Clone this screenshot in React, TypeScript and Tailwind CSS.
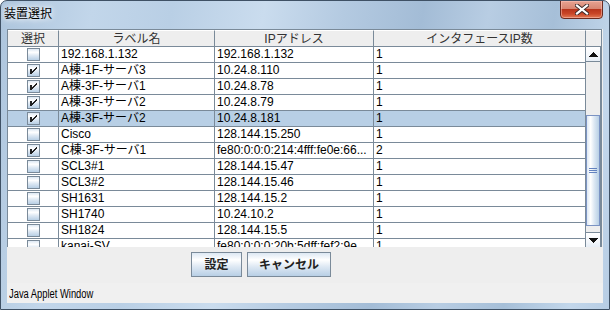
import React from "react";

type Row = { c: boolean; label: string; ip: string; n: string; sel?: boolean };

const rows: Row[] = [
  { c: false, label: "192.168.1.132", ip: "192.168.1.132", n: "1" },
  { c: true, label: "A棟-1F-サーバ3", ip: "10.24.8.110", n: "1" },
  { c: true, label: "A棟-3F-サーバ1", ip: "10.24.8.78", n: "1" },
  { c: true, label: "A棟-3F-サーバ2", ip: "10.24.8.79", n: "1" },
  { c: true, label: "A棟-3F-サーバ2", ip: "10.24.8.181", n: "1", sel: true },
  { c: false, label: "Cisco", ip: "128.144.15.250", n: "1" },
  { c: true, label: "C棟-3F-サーバ1", ip: "fe80:0:0:0:214:4fff:fe0e:66...", n: "2" },
  { c: false, label: "SCL3#1", ip: "128.144.15.47", n: "1" },
  { c: false, label: "SCL3#2", ip: "128.144.15.46", n: "1" },
  { c: false, label: "SH1631", ip: "128.144.15.2", n: "1" },
  { c: false, label: "SH1740", ip: "10.24.10.2", n: "1" },
  { c: false, label: "SH1824", ip: "128.144.15.5", n: "1" },
  { c: false, label: "kanai-SV", ip: "fe80:0:0:0:20b:5dff:fef2:9e...", n: "1" },
];

const checkPixels: [number, number][] = [
  [9, 3], [8, 4], [7, 5], [6, 6], [5, 7],
  [9, 4], [8, 5], [7, 6], [6, 7], [5, 8],
];

function CheckBox({ checked }: { checked: boolean }) {
  return (
    <svg width="13" height="13" viewBox="0 0 13 13" shapeRendering="crispEdges">
      <defs>
        <linearGradient id="cbg" x1="0" y1="0" x2="0" y2="1">
          <stop offset="0" stopColor="#dde8f3" />
          <stop offset="0.3" stopColor="#ffffff" />
          <stop offset="0.6" stopColor="#dde8f3" />
          <stop offset="1" stopColor="#b8cfe5" />
        </linearGradient>
      </defs>
      <rect x="0" y="0" width="13" height="13" fill="#7a8a99" />
      <rect x="1" y="1" width="11" height="11" fill="url(#cbg)" />
      {checked && (
        <g fill="#222222">
          <rect x="3" y="5" width="2" height="5" />
          {checkPixels.map(([x, y], i) => (
            <rect key={i} x={x} y={y} width="1" height="1" />
          ))}
        </g>
      )}
    </svg>
  );
}

const font = "font-['Liberation_Sans','Noto_Sans_CJK_JP',sans-serif]";
const cols = "grid grid-cols-[51px_156px_159px_212px]";

function Arrow({ up }: { up: boolean }) {
  return (
    <svg width="9" height="5" viewBox="0 0 9 5" shapeRendering="crispEdges">
      <polygon points={up ? "4.5,0 9,5 0,5" : "0,0 9,0 4.5,5"} fill="#111111" />
    </svg>
  );
}

export default function App() {
  return (
    <div
      className={`${font} w-[610px] h-[310px] overflow-hidden rounded-t-[7px] border border-[#3f5165] bg-[linear-gradient(100deg,#adc5dd_0%,#c2d6ea_14%,#b9cfe5_26%,#cadcee_40%,#b4cae1_52%,#a3bcd6_64%,#b8cde3_74%,#a6bfd8_84%,#c3d7eb_94%,#b7cde4_100%)] flex flex-col`}
    >
      {/* title bar */}
      <div className="h-[28px] flex items-start relative">
        <div className="pl-[3px] pt-[5px] text-[12px] leading-[16px] text-black [text-shadow:0_0_5px_#ffffff,0_0_8px_#ffffff]">
          装置選択
        </div>
        <div className="ml-auto mr-[6px] mt-[-1px] w-[43px] h-[19px] rounded-b-[4px] border border-[#6b2b20] bg-[linear-gradient(to_bottom,#e7a392_0%,#d88672_45%,#b8351c_50%,#c94628_75%,#e27a55_100%)] flex items-center justify-center shadow-[inset_0_0_0_1px_rgba(255,200,190,0.5)]">
          <svg width="14" height="11" viewBox="0 0 14 11">
            <path d="M2 1.5 L12 9.5 M12 1.5 L2 9.5" stroke="#3a2a2a" strokeWidth="4" strokeLinecap="square" />
            <path d="M2 1.5 L12 9.5 M12 1.5 L2 9.5" stroke="#ffffff" strokeWidth="2.2" strokeLinecap="square" />
          </svg>
        </div>
      </div>

      {/* client */}
      <div className="ml-[6px] w-[596px] h-[274px] bg-[#eeeeee] flex flex-col">
        {/* table pane */}
        <div className="w-[595px] h-[218px] border-l border-t border-r border-[#7a8a99] flex overflow-hidden bg-white">
          <div className="w-[578px] flex flex-col">
            <div className={`${cols} h-[17px] bg-[#eeeeee] border-b border-[#7a8a99] text-[12px] leading-[16px] text-[#333333] shrink-0`}>
              <div className="text-center border-r border-[#7a8a99] border-t border-t-white">選択</div>
              <div className="text-center border-r border-[#7a8a99] border-t border-t-white">ラベル名</div>
              <div className="text-center border-r border-[#7a8a99] border-t border-t-white">IPアドレス</div>
              <div className="text-center border-r border-[#7a8a99] border-t border-t-white">インタフェースIP数</div>
            </div>
            {rows.map((r, i) => (
              <div
                key={i}
                className={`${cols} h-[16px] shrink-0 border-b border-[#7a8a99] text-[12px] leading-[15px] text-black ${r.sel ? "bg-[#b8cfe5]" : "bg-white"}`}
              >
                <div className="border-r border-[#7a8a99] flex items-center justify-center">
                  <CheckBox checked={r.c} />
                </div>
                <div className="border-r border-[#7a8a99] pl-[2px] whitespace-nowrap overflow-hidden">{r.label}</div>
                <div className="border-r border-[#7a8a99] pl-[2px] whitespace-nowrap overflow-hidden">{r.ip}</div>
                <div className="border-r border-[#7a8a99] pl-[2px] whitespace-nowrap overflow-hidden">{r.n}</div>
              </div>
            ))}
          </div>
          {/* scrollbar */}
          <div className="w-[15px] flex flex-col shrink-0">
            <div className="h-[17px] bg-[#eeeeee] border-b border-[#7a8a99] border-t border-t-white shrink-0" />
            <div className="h-[15px] shrink-0 border-b border-[#7a8a99] border-r border-r-[#7a8a99] bg-[linear-gradient(to_bottom,#ffffff,#f4f7fb_60%,#e6eef6)] flex items-center justify-center">
              <Arrow up />
            </div>
            <div className="flex-1 bg-[#eeeeee] border-r border-[#7a8a99] flex flex-col">
              <div className="mt-[53px] h-[111px] border border-[#7b93c3] bg-[linear-gradient(to_right,#dde8f3_0%,#ffffff_30%,#dde8f3_60%,#b8cfe5_100%)] flex items-center justify-center">
                <div className="flex flex-col gap-[1px] w-[8px]">
                  <div className="h-[1px] bg-[#6382bf]" />
                  <div className="h-[1px] bg-[#6382bf]" />
                  <div className="h-[1px] bg-[#6382bf]" />
                </div>
              </div>
            </div>
            <div className="h-[15px] shrink-0 border-t border-[#7a8a99] border-r border-r-[#7a8a99] bg-[linear-gradient(to_bottom,#ffffff,#f4f7fb_60%,#e6eef6)] flex items-center justify-center">
              <Arrow up={false} />
            </div>
          </div>
        </div>

        {/* buttons */}
        <div className="h-[36px] flex items-start pt-[5px] pl-[184px] gap-[5px]">
          <div className="w-[51px] h-[25px] border border-[#7a8a99] bg-[linear-gradient(to_bottom,#dde8f3_0%,#ffffff_30%,#dde8f3_60%,#b8cfe5_100%)] flex items-center justify-center text-[12px] font-bold text-[#222222]">
            設定
          </div>
          <div className="w-[84px] h-[25px] border border-[#7a8a99] bg-[linear-gradient(to_bottom,#dde8f3_0%,#ffffff_30%,#dde8f3_60%,#b8cfe5_100%)] flex items-center justify-center text-[12px] font-bold text-[#222222]">
            キャンセル
          </div>
        </div>

        {/* status */}
        <div className="h-[20px] bg-[#f0f0f0] pl-[2px] pt-[4px] text-[12px] leading-[14px] text-black whitespace-nowrap">
          <span className="inline-block origin-left scale-x-[0.78]">Java Applet Window</span>
        </div>
      </div>
    </div>
  );
}
